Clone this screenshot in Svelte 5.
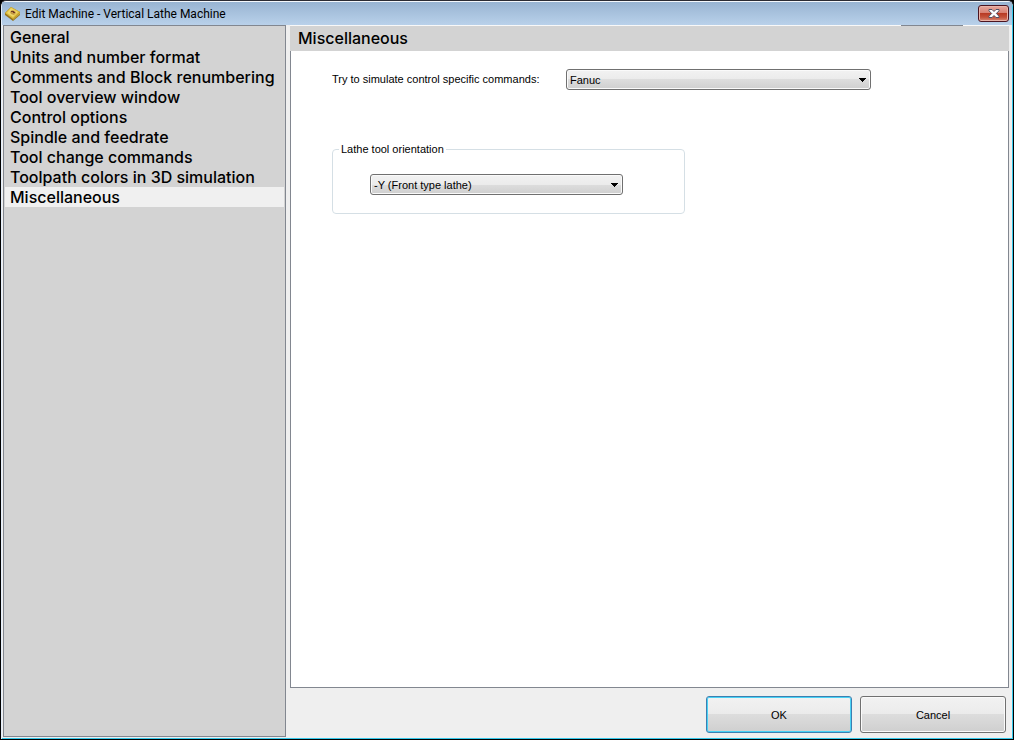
<script lang="ts">
	const SECTIONS = [
		'General',
		'Units and number format',
		'Comments and Block renumbering',
		'Tool overview window',
		'Control options',
		'Spindle and feedrate',
		'Tool change commands',
		'Toolpath colors in 3D simulation',
		'Miscellaneous'
	];

	let section = $state('Miscellaneous');
	let control = $state('Fanuc');
	let orientation = $state('-Y (Front type lathe)');
</script>

{#snippet arrow()}
	<svg class="arrow" width="7" height="4" viewBox="0 0 7 4" shape-rendering="crispEdges" aria-hidden="true">
		<path d="M0 0h7v1H6v1H5v1H4v1H3V3H2V2H1V1H0z" />
	</svg>
{/snippet}

<div class="window">
	<header class="titlebar">
		<svg class="logo" width="16" height="16" viewBox="0 0 16 16" aria-hidden="true">
			<path d="M0 7 6 1l9 5v3l-7 6-8-6z" fill="#94731c" />
			<path d="M0 7 6 1l9 5-7 7z" fill="#dcbc3c" />
			<path d="M2 7l4-5 7 4-5 5z" fill="#efd76a" />
			<path d="M8 13l7-7v2l-7 6z" fill="#c9a63a" />
			<path d="M5 6l2-2 3 1 1 2-2 2-3-1z" fill="#c39a44" />
			<path d="M6 5h3v1h1v1H8V6H6z" fill="#6e3a24" />
		</svg>
		<h1>Edit Machine - Vertical Lathe Machine</h1>
		<button class="close" aria-label="Close">
			<svg width="12" height="9" viewBox="0 0 12 9" aria-hidden="true">
				<path
					d="M1 .5h3l2 2 2-2h3v1.3L8.3 4.5 11 7.2v1.3H8l-2-2-2 2H1V7.2l2.700-2.700L1 1.800z"
					fill="#fff"
					stroke="#4f5366"
				/>
			</svg>
		</button>
	</header>

	<div class="body">
		<nav>
			{#each SECTIONS as name}
				<button class:selected={section === name} onclick={() => (section = name)}>{name}</button>
			{/each}
		</nav>

		<main>
			<h2>{section}</h2>

			<div class="page">
				<div class="field">
					<label for="control">Try to simulate control specific commands:</label>
					<div class="combo">
						<select id="control" bind:value={control}>
							<option>Fanuc</option>
						</select>
						{@render arrow()}
					</div>
				</div>

				<fieldset>
					<legend>Lathe tool orientation</legend>
					<div class="combo">
						<select aria-label="Lathe tool orientation" bind:value={orientation}>
							<option>-Y (Front type lathe)</option>
						</select>
						{@render arrow()}
					</div>
				</fieldset>
			</div>

			<footer>
				<button class="default">OK</button>
				<button>Cancel</button>
			</footer>
		</main>
	</div>
</div>

<style>
	:global(body) {
		margin: 0;
		background: #000;
	}

	.window {
		box-sizing: border-box;
		min-height: 100vh;
		display: flex;
		flex-direction: column;
		border: 1px solid #000;
		border-top-color: #2b2b33;
		border-radius: 6px 6px 0 0;
		background: #efefef;
		color: #000;
		font: 11px/14px 'Liberation Sans', sans-serif;
		box-shadow:
			inset 0 1px #f4f8fc,
			inset 1px 0 #e4eefa,
			inset -1px -1px #35c8ea;
		overflow: hidden;
	}

	button,
	select {
		font: inherit;
		color: inherit;
	}

	.titlebar {
		display: flex;
		align-items: center;
		gap: 4px;
		height: 23px;
		margin: 1px 1px 0;
		padding: 0 3px;
		background: linear-gradient(#98b4d2, #b9d1ea);
	}

	h1 {
		flex: 1;
		margin: 0;
		font: 12px/16px Roboto, sans-serif;
	}

	.close {
		display: flex;
		align-items: center;
		justify-content: center;
		width: 31px;
		height: 17px;
		padding: 0;
		border: 1px solid #4b1420;
		border-radius: 3px;
		background: linear-gradient(#e6a79d, #d88173 45%, #b83a24 50%, #c4523b 75%, #d98a76);
		box-shadow: inset 0 0 0 1px #e9b3a8;
	}

	.body {
		flex: 1;
		display: flex;
		gap: 4px;
		margin: 0 4px 2px 2px;
	}

	nav {
		box-sizing: border-box;
		flex: none;
		width: 283px;
		padding: 1px;
		border: 1px solid #828790;
		background: #d3d3d3;
	}

	nav button {
		display: block;
		width: 100%;
		height: 20px;
		padding: 0 5px;
		border: 0;
		background: none;
		text-align: left;
		white-space: nowrap;
	}

	nav button,
	h2 {
		font: 500 16px/20px Inter, sans-serif;
	}

	nav button.selected {
		background: #f0f0f0;
	}

	main {
		flex: 1;
		display: flex;
		flex-direction: column;
		padding-top: 1px;
		background:
			linear-gradient(#828790, #828790) right 46px top / 62px 1px no-repeat,
			linear-gradient(#f8f8f8, #f8f8f8) top / 100% 1px no-repeat;
	}

	h2 {
		margin: 0;
		padding: 2px 8px 3px;
		background: #d3d3d3;
	}

	.page {
		flex: 1;
		padding: 18px 41px;
		border: 1px solid #828790;
		border-top: 0;
		background: #fff;
	}

	.field {
		display: grid;
		grid-template-columns: 234px minmax(0, 305px);
	}

	label {
		padding-top: 3px;
	}

	.combo {
		display: grid;
		align-items: center;
	}

	.combo > :global(*) {
		grid-area: 1 / 1;
	}

	select {
		appearance: none;
		width: 100%;
		height: 21px;
		padding: 1px 20px 0 3px;
		border: 1px solid #707070;
		border-radius: 3px;
		background: linear-gradient(#f2f2f2, #ebebeb 50%, #dddddd 50%, #cfcfcf);
		box-shadow: inset 0 0 0 1px #fafafa;
	}

	.arrow {
		justify-self: end;
		margin-right: 5px;
		pointer-events: none;
	}

	fieldset {
		box-sizing: border-box;
		max-width: 353px;
		margin: 52px 0 0;
		padding: 18px 61px 18px 37px;
		border: 1px solid #d5dfe5;
		border-radius: 4px;
	}

	legend {
		margin-left: -31px;
		padding: 0 2px;
	}

	footer {
		display: flex;
		justify-content: flex-end;
		gap: 8px;
		padding: 8px 3px 4px;
	}

	footer button {
		width: 146px;
		height: 37px;
		border: 1px solid #707070;
		border-radius: 3px;
		background: linear-gradient(#f2f2f2, #ebebeb 49%, #dddddd 49%, #cfcfcf);
		box-shadow: inset 0 0 0 1px #fafafa;
	}

	footer .default {
		border-color: #3c7fb1;
		box-shadow: inset 0 0 0 1px #48d2f5;
	}
</style>
